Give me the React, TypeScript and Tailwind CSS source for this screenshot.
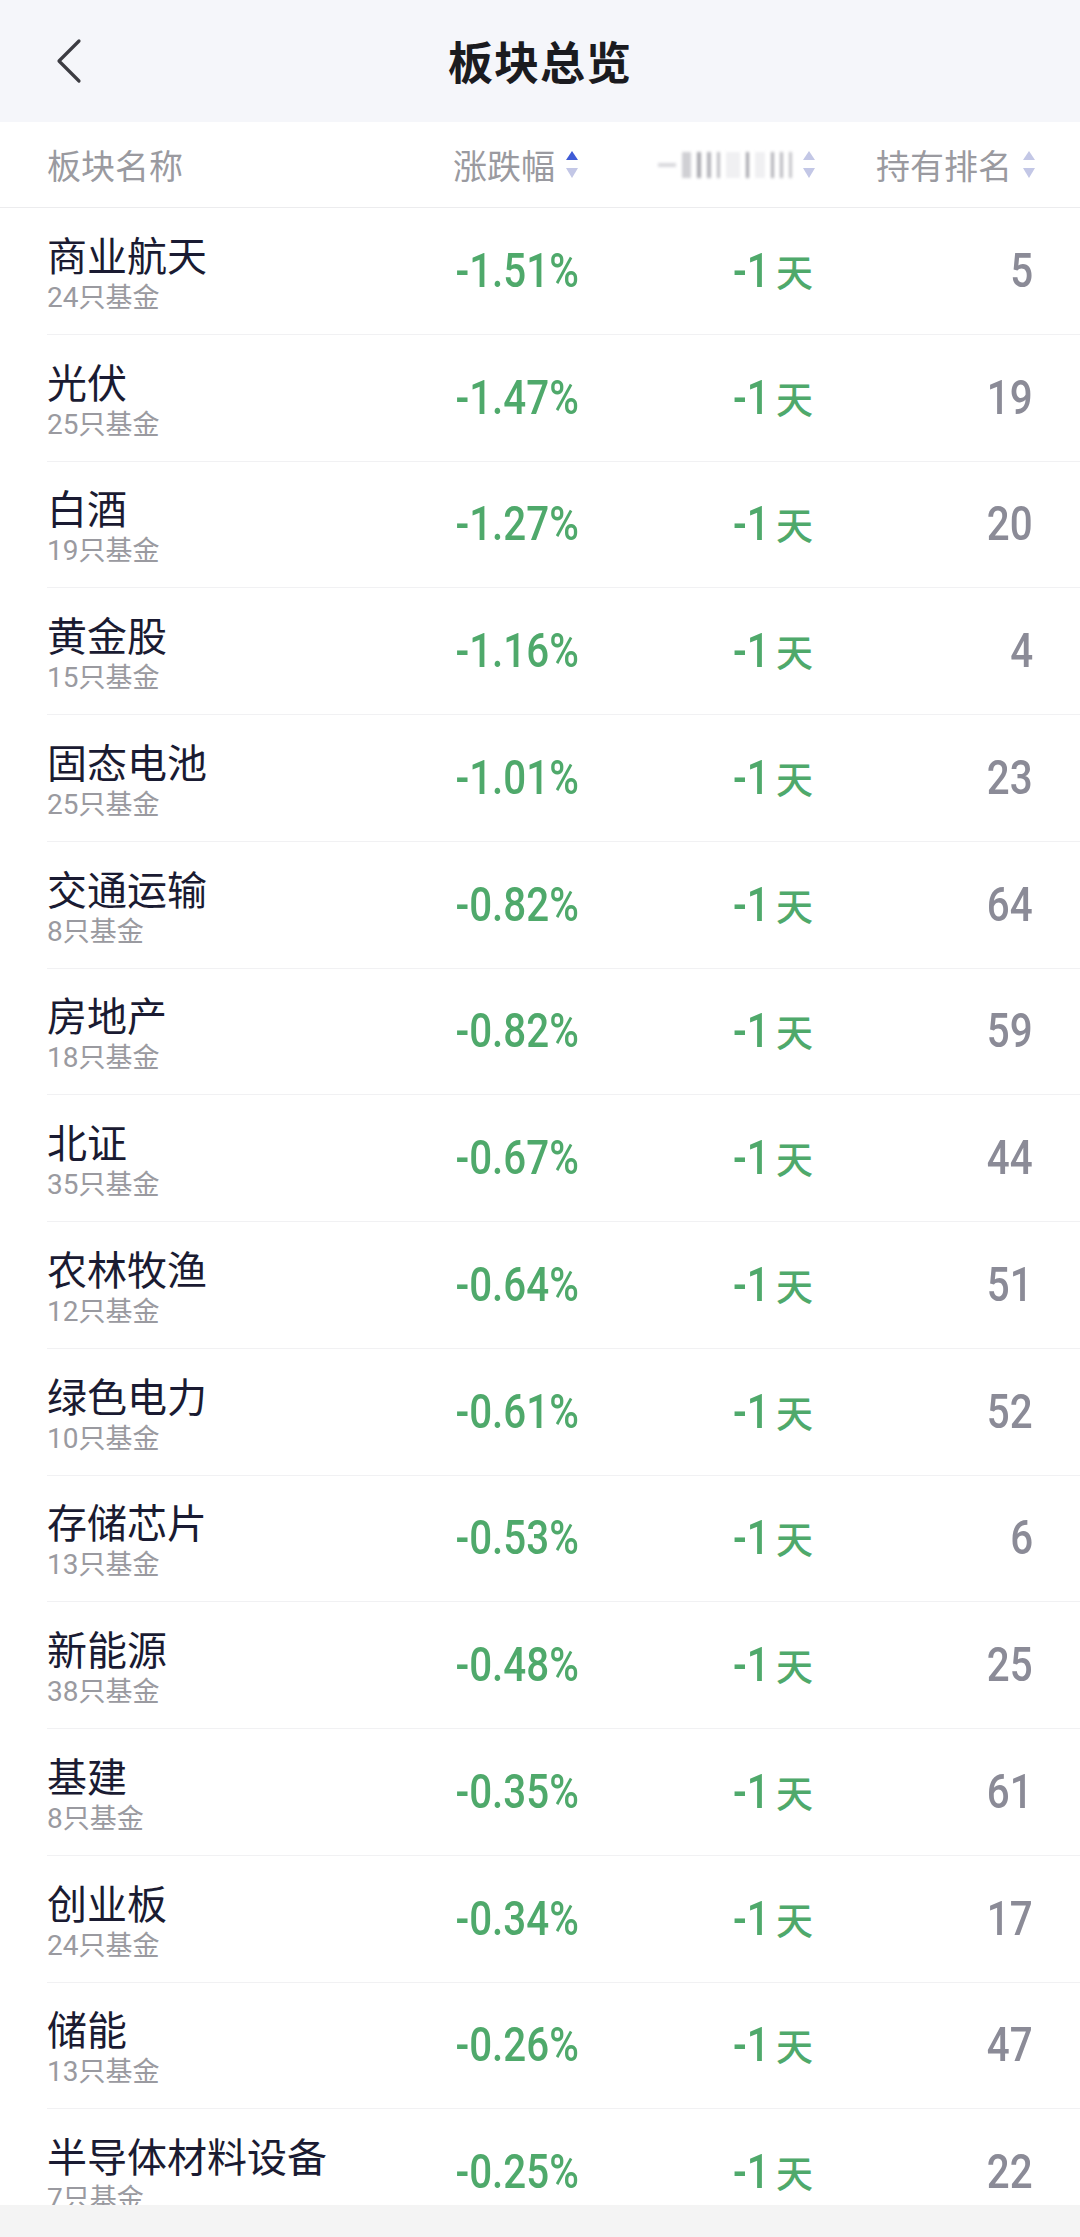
type Row = {
  name: string
  count: number
  change: string
  rank: number
}

const rows: Row[] = [
  { name: '商业航天', count: 24, change: '-1.51%', rank: 5 },
  { name: '光伏', count: 25, change: '-1.47%', rank: 19 },
  { name: '白酒', count: 19, change: '-1.27%', rank: 20 },
  { name: '黄金股', count: 15, change: '-1.16%', rank: 4 },
  { name: '固态电池', count: 25, change: '-1.01%', rank: 23 },
  { name: '交通运输', count: 8, change: '-0.82%', rank: 64 },
  { name: '房地产', count: 18, change: '-0.82%', rank: 59 },
  { name: '北证', count: 35, change: '-0.67%', rank: 44 },
  { name: '农林牧渔', count: 12, change: '-0.64%', rank: 51 },
  { name: '绿色电力', count: 10, change: '-0.61%', rank: 52 },
  { name: '存储芯片', count: 13, change: '-0.53%', rank: 6 },
  { name: '新能源', count: 38, change: '-0.48%', rank: 25 },
  { name: '基建', count: 8, change: '-0.35%', rank: 61 },
  { name: '创业板', count: 24, change: '-0.34%', rank: 17 },
  { name: '储能', count: 13, change: '-0.26%', rank: 47 },
  { name: '半导体材料设备', count: 7, change: '-0.25%', rank: 22 },
]

const cjk = { fontFamily: '"Noto Sans CJK SC", "Noto Sans", sans-serif' }
const num = { fontFamily: 'Roboto, "Noto Sans CJK SC", sans-serif' }

function SortIcon({ active }: { active?: boolean }) {
  return (
    <svg width="14" height="30" viewBox="0 0 14 30" className="ml-[10px] shrink-0">
      <path d="M1 10 L7 1 L13 10 Z" fill={active ? '#3f5bd6' : '#c3c7e6'} />
      <path d="M1 18 L13 18 L7 28 Z" fill="#c3c7e6" />
    </svg>
  )
}

export default function App() {
  return (
    <div className="flex h-[2237px] w-[1080px] flex-col overflow-hidden bg-white" style={cjk}>
      <header className="relative flex h-[122px] shrink-0 items-center justify-center bg-[#f5f6fa]">
        <button className="absolute left-[52px] top-[37px]">
          <svg width="34" height="48" viewBox="0 0 34 48">
            <path
              d="M27 4 L7 24 L27 44"
              fill="none"
              stroke="#3c3c42"
              strokeWidth="3.2"
              strokeLinecap="round"
              strokeLinejoin="round"
            />
          </svg>
        </button>
        <h1 className="text-[45px] font-semibold tracking-[1px] text-[#1b1b1f]">板块总览</h1>
      </header>

      <div className="flex h-[86px] shrink-0 items-center border-b border-[#ececee] pl-[47px] pr-[44px] text-[34px] text-[#9a9aa0]">
        <div className="flex-1">板块名称</div>
        <div className="flex w-[220px] items-center justify-end">
          <span>涨跌幅</span>
          <SortIcon active />
        </div>
        <div className="flex w-[237px] items-center justify-end">
          <div className="flex h-[30px] w-[134px] items-center gap-[6px] blur-[1.5px]">
            <div className="h-[4px] w-[18px] bg-[#d8d8dc]" />
            <div className="h-[26px] w-[10px] bg-[#d0d0d4]" />
            <div className="h-[26px] w-[4px] bg-[#a8a8ae]" />
            <div className="h-[26px] w-[4px] bg-[#b4b4ba]" />
            <div className="h-[26px] w-[3px] bg-[#bdbdc2]" />
            <div className="h-[26px] w-[14px] bg-[#f0f0f2]" />
            <div className="h-[26px] w-[4px] bg-[#a4a4aa]" />
            <div className="h-[26px] w-[10px] bg-[#f0f0f2]" />
            <div className="h-[26px] w-[3px] bg-[#b0b0b6]" />
            <div className="h-[26px] w-[3px] bg-[#b8b8be]" />
            <div className="h-[26px] w-[3px] bg-[#c4c4c8]" />
          </div>
          <SortIcon />
        </div>
        <div className="flex w-[220px] items-center justify-end">
          <span>持有排名</span>
          <SortIcon />
        </div>
      </div>

      <div className="flex-1 overflow-hidden pl-[47px]">
        {rows.map((r) => (
          <div
            key={r.name}
            className="flex h-[126.75px] items-center border-b border-[#f1f1f3] pr-[44px]"
          >
            <div className="flex flex-1 flex-col">
              <span className="text-[40px] leading-[50px] text-[#1a1b32]">{r.name}</span>
              <span className="text-[27px] leading-[34px] text-[#9a9aa0]">
                <span style={num} className="text-[28px] leading-none">
                  {r.count}
                </span>
                只基金
              </span>
            </div>
            <div className="flex w-[220px] justify-end">
              <span
                style={num}
                className="inline-block origin-right scale-x-[0.84] text-[48px] leading-[56px] font-medium text-[#4fa96b]"
              >
                {r.change}
              </span>
            </div>
            <div className="flex w-[237px] items-center justify-end pr-[3px] text-[#4fa96b]">
              <span
                style={num}
                className="inline-block origin-right scale-x-[0.84] text-[48px] leading-[56px] font-medium"
              >
                -1
              </span>
              <span className="ml-[6px] text-[37px] leading-[56px] font-medium">天</span>
            </div>
            <div className="flex w-[220px] justify-end pr-[3px]">
              <span
                style={num}
                className="inline-block origin-right scale-x-[0.84] text-[48px] leading-[56px] font-medium text-[#8b8b97]"
              >
                {r.rank}
              </span>
            </div>
          </div>
        ))}
      </div>

      <div className="h-[32px] shrink-0 bg-[#f4f4f4]" />
    </div>
  )
}
